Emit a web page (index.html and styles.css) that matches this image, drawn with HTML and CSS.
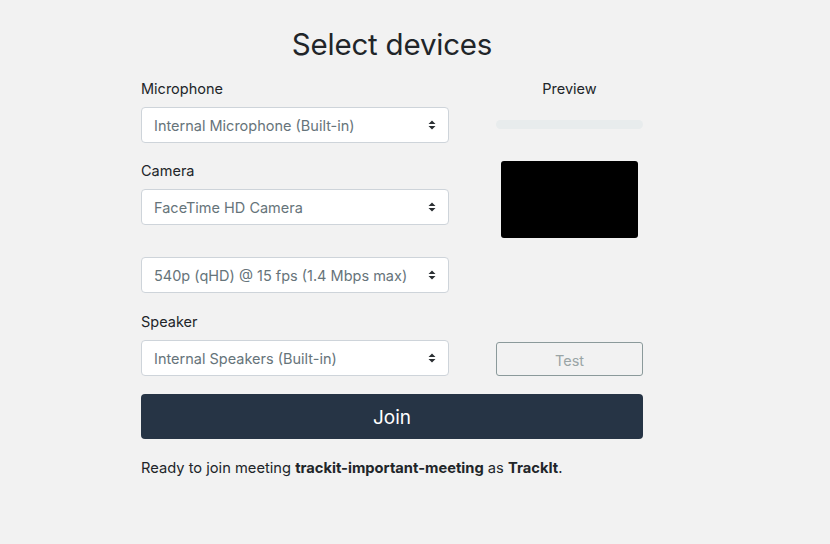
FILE: index.html
```html
<!DOCTYPE html>
<html>
<head>
<meta charset="utf-8">
<link rel="stylesheet" href="styles.css">
</head>
<body>
<main class="page">
  <h1 class="title">Select devices</h1>
  <div class="grid">
    <label class="label l1">Microphone</label>
    <div class="label preview-label">Preview</div>
    <div class="select s1"><span>Internal Microphone (Built-in)</span><svg class="arrows" width="8" height="12" viewBox="0 0 8 12"><path d="M4 1.5 L7.5 5 H0.5 Z M4 10.5 L7.5 7 H0.5 Z" fill="#2b2f33"/></svg></div>
    <div class="meter"></div>
    <label class="label l2">Camera</label>
    <div class="video"></div>
    <div class="select s2"><span>FaceTime HD Camera</span><svg class="arrows" width="8" height="12" viewBox="0 0 8 12"><path d="M4 1.5 L7.5 5 H0.5 Z M4 10.5 L7.5 7 H0.5 Z" fill="#2b2f33"/></svg></div>
    <div class="select s3"><span>540p (qHD) @ 15 fps (1.4 Mbps max)</span><svg class="arrows" width="8" height="12" viewBox="0 0 8 12"><path d="M4 1.5 L7.5 5 H0.5 Z M4 10.5 L7.5 7 H0.5 Z" fill="#2b2f33"/></svg></div>
    <label class="label l3">Speaker</label>
    <div class="select s4"><span>Internal Speakers (Built-in)</span><svg class="arrows" width="8" height="12" viewBox="0 0 8 12"><path d="M4 1.5 L7.5 5 H0.5 Z M4 10.5 L7.5 7 H0.5 Z" fill="#2b2f33"/></svg></div>
    <button class="test">Test</button>
  </div>
  <button class="join">Join</button>
  <p class="ready">Ready to join meeting <b>trackit-important-meeting</b> as <b>TrackIt</b>.</p>
</main>
</body>
</html>
```
FILE: styles.css
```css
html, body {
  margin: 0;
  padding: 0;
  background: #f2f2f2;
  font-family: Inter, "Noto Sans", sans-serif;
  color: #212529;
}
.page {
  width: 502px;
  margin-left: 141px;
  padding-top: 24px;
}
.title {
  margin: 0;
  text-align: center;
  font-weight: 400;
  font-size: 29.5px;
  line-height: 40px;
  letter-spacing: -0.2px;
}
.grid {
  display: grid;
  grid-template-columns: 308px 147px;
  column-gap: 47px;
  margin-top: 14px;
}
.label {
  font-size: 14.5px;
  line-height: 22px;
  height: 22px;
}
.l1 { grid-column: 1; grid-row: 1; }
.preview-label { grid-column: 2; grid-row: 1; text-align: center; }
.s1 { grid-column: 1; grid-row: 2; margin-top: 7px; }
.meter {
  grid-column: 2; grid-row: 2;
  align-self: center;
  height: 9px;
  margin-top: 6px;
  background: #e8eced;
  border-radius: 5px;
}
.l2 { grid-column: 1; grid-row: 3; margin-top: 17px; }
.video {
  grid-column: 2; grid-row: 3 / span 3;
  justify-self: center;
  align-self: start;
  width: 137px;
  height: 77px;
  margin-top: 18px;
  background: #000;
  border-radius: 3px;
}
.s2 { grid-column: 1; grid-row: 4; margin-top: 7px; }
.s3 { grid-column: 1; grid-row: 5; margin-top: 32px; }
.l3 { grid-column: 1; grid-row: 6; margin-top: 18px; }
.s4 { grid-column: 1; grid-row: 7; margin-top: 7px; }
.select {
  box-sizing: border-box;
  height: 36px;
  display: flex;
  align-items: center;
  justify-content: space-between;
  padding: 0 12px 0 12px;
  background: #fff;
  border: 1px solid #ced4da;
  border-radius: 4px;
  font-size: 14.5px;
  color: #66747a;
}
.arrows { flex: none; margin-right: 0; }
.test {
  grid-column: 2; grid-row: 7;
  align-self: end;
  box-sizing: border-box;
  height: 34px;
  background: transparent;
  border: 1px solid #8b9a9b;
  border-radius: 3px;
  font-family: inherit;
  font-size: 14.5px;
  color: #9aa5a6;
  padding: 2px 0 0;
}
.join {
  display: block;
  width: 100%;
  height: 45px;
  margin-top: 18px;
  background: #263445;
  border: none;
  border-radius: 4px;
  color: #fff;
  font-family: inherit;
  font-size: 19px;
  padding: 2px 0 0;
}
.ready {
  margin: 18px 0 0;
  font-size: 14.7px;
  line-height: 22px;
}
.ready b { font-weight: 650; }
```
